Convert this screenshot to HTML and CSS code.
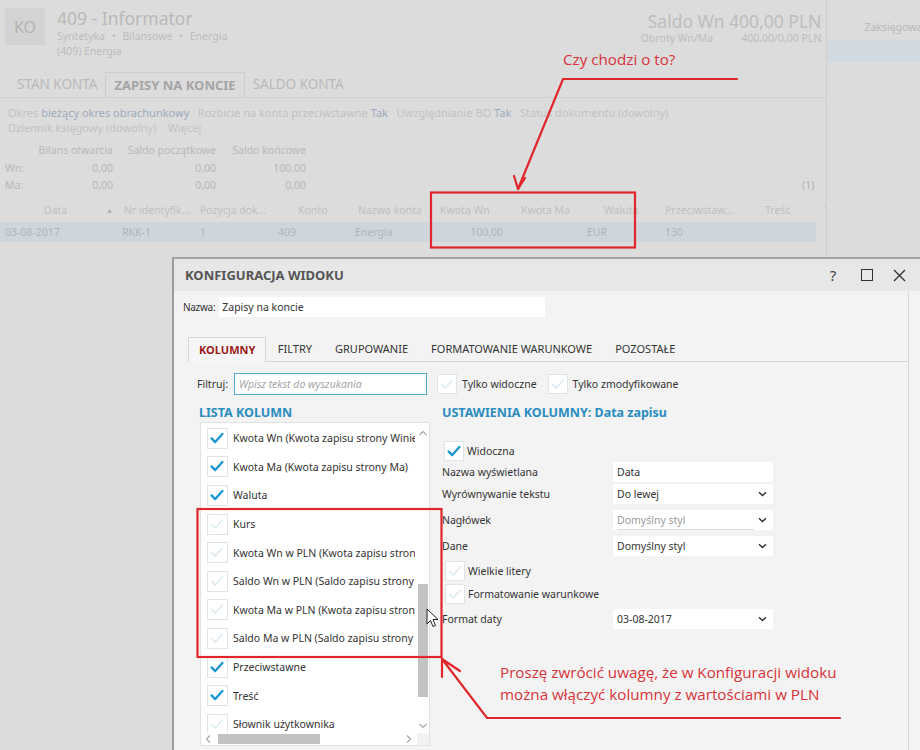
FILE: index.html
```html
<!DOCTYPE html>
<html lang="pl">
<head>
<meta charset="utf-8">
<title>Konfiguracja widoku</title>
<link rel="stylesheet" href="styles.css">
</head>
<body>
<div class="app">
  <div class="main">
    <header class="hdr">
      <div class="ko">KO</div>
      <div class="hdr-info">
        <div class="hdr-title">409 - Informator</div>
        <div class="hdr-sub">Syntetyka <span class="dot">•</span> Bilansowe <span class="dot">•</span> Energia</div>
        <div class="hdr-sub">(409) Energia</div>
      </div>
      <div class="hdr-right">
        <div class="saldo">Saldo Wn 400,00 PLN</div>
        <div class="obroty"><span>Obroty Wn/Ma</span><span>400,00/0,00 PLN</span></div>
      </div>
    </header>
    <nav class="tabs">
      <div class="tab">STAN KONTA</div>
      <div class="tab active">ZAPISY NA KONCIE</div>
      <div class="tab">SALDO KONTA</div>
    </nav>
    <div class="filters">
      <div>Okres <span class="lnk">bieżący okres obrachunkowy</span>&nbsp;&nbsp; Rozbicie na konta przeciwstawne <span class="lnk">Tak</span>&nbsp;&nbsp; Uwzględnianie BO <span class="lnk">Tak</span>&nbsp;&nbsp; Status dokumentu (dowolny)</div>
      <div>Dziennik księgowy (dowolny)&nbsp;&nbsp;&nbsp; Więcej</div>
    </div>
    <div class="bal-wrap">
      <div class="balances">
        <span></span><span>Bilans otwarcia</span><span>Saldo początkowe</span><span>Saldo końcowe</span>
        <span class="lbl">Wn:</span><span>0,00</span><span>0,00</span><span>100,00</span>
        <span class="lbl">Ma:</span><span>0,00</span><span>0,00</span><span>0,00</span>
      </div>
      <div class="count">(1)</div>
    </div>
    <div class="grid-head">
      <div class="h1">Data <span class="sort">▲</span></div>
      <div class="h2">Nr identyfik...</div>
      <div class="h3">Pozycja dok...</div>
      <div class="h4">Konto</div>
      <div class="h5">Nazwa konta</div>
      <div class="h6">Kwota Wn</div>
      <div class="h7">Kwota Ma</div>
      <div class="h8">Waluta</div>
      <div class="h9">Przeciwstaw...</div>
      <div class="h10">Treść</div>
      <div class="hup">˄</div>
    </div>
    <div class="grid-row">
      <div class="r1">03-08-2017</div>
      <div class="r2">RKK-1</div>
      <div class="r3">1</div>
      <div class="r4">409</div>
      <div class="r5">Energia</div>
      <div class="r6">100,00</div>
      <div class="r7"></div>
      <div class="r8">EUR</div>
      <div class="r9">130</div>
      <div class="r10"></div>
    </div>
  </div>
  <aside class="side">
    <div class="side-head">Zaksięgowa</div>
    <div class="side-bar"></div>
  </aside>
</div>

<div class="dialog">
  <div class="dlg-title">
    <span class="dlg-caption">KONFIGURACJA WIDOKU</span>
    <div class="dlg-btns">
      <span class="btn-help">?</span>
      <span class="btn-max"></span>
      <svg class="btn-close" width="13" height="13" viewBox="0 0 13 13"><path d="M1 1L12 12M12 1L1 12" stroke="#333" stroke-width="1.4" fill="none"/></svg>
    </div>
  </div>
  <div class="dlg-content">
    <div class="name-row">
      <span class="name-lbl">Nazwa:</span>
      <div class="name-input">Zapisy na koncie</div>
    </div>
    <div class="dtabs">
      <div class="dtab active">KOLUMNY</div>
      <div class="dtab">FILTRY</div>
      <div class="dtab">GRUPOWANIE</div>
      <div class="dtab">FORMATOWANIE WARUNKOWE</div>
      <div class="dtab">POZOSTAŁE</div>
    </div>
    <div class="panel">
      <div class="filter-row">
        <span>Filtruj:</span>
        <div class="search">Wpisz tekst do wyszukania</div>
        <span class="cb off"><svg viewBox="0 0 20 20"><path d="M4 10.5l4 4 8-9"/></svg></span>
        <span class="cbl">Tylko widoczne</span>
        <span class="cb off gap2"><svg viewBox="0 0 20 20"><path d="M4 10.5l4 4 8-9"/></svg></span>
        <span class="cbl">Tylko zmodyfikowane</span>
      </div>
      <div class="cols">
        <div class="left">
          <div class="sec">LISTA KOLUMN</div>
          <div class="listbox">
            <div class="items">
              <div class="item"><span class="cb on"><svg viewBox="0 0 20 20"><path d="M4 10.5l4 4 8-9"/></svg></span><span class="itxt">Kwota Wn (Kwota zapisu strony Winien)</span></div>
              <div class="item"><span class="cb on"><svg viewBox="0 0 20 20"><path d="M4 10.5l4 4 8-9"/></svg></span><span class="itxt">Kwota Ma (Kwota zapisu strony Ma)</span></div>
              <div class="item"><span class="cb on"><svg viewBox="0 0 20 20"><path d="M4 10.5l4 4 8-9"/></svg></span><span class="itxt">Waluta</span></div>
              <div class="item"><span class="cb off"><svg viewBox="0 0 20 20"><path d="M4 10.5l4 4 8-9"/></svg></span><span class="itxt">Kurs</span></div>
              <div class="item"><span class="cb off"><svg viewBox="0 0 20 20"><path d="M4 10.5l4 4 8-9"/></svg></span><span class="itxt">Kwota Wn w PLN (Kwota zapisu strony Winien)</span></div>
              <div class="item"><span class="cb off"><svg viewBox="0 0 20 20"><path d="M4 10.5l4 4 8-9"/></svg></span><span class="itxt">Saldo Wn w PLN (Saldo zapisu strony Winien)</span></div>
              <div class="item"><span class="cb off"><svg viewBox="0 0 20 20"><path d="M4 10.5l4 4 8-9"/></svg></span><span class="itxt">Kwota Ma w PLN (Kwota zapisu strony Ma)</span></div>
              <div class="item"><span class="cb off"><svg viewBox="0 0 20 20"><path d="M4 10.5l4 4 8-9"/></svg></span><span class="itxt">Saldo Ma w PLN (Saldo zapisu strony Ma)</span></div>
              <div class="item"><span class="cb on"><svg viewBox="0 0 20 20"><path d="M4 10.5l4 4 8-9"/></svg></span><span class="itxt">Przeciwstawne</span></div>
              <div class="item"><span class="cb on"><svg viewBox="0 0 20 20"><path d="M4 10.5l4 4 8-9"/></svg></span><span class="itxt">Treść</span></div>
              <div class="item"><span class="cb off"><svg viewBox="0 0 20 20"><path d="M4 10.5l4 4 8-9"/></svg></span><span class="itxt">Słownik użytkownika</span></div>
            </div>
            <div class="vscroll">
              <svg class="arr" width="10" height="8" viewBox="0 0 10 8"><path d="M1.5 6L5 2.5 8.5 6" fill="none" stroke="#a8a8a8" stroke-width="1.2"/></svg>
              <div class="vtrack"><div class="vthumb"></div></div>
              <svg class="arr" width="10" height="8" viewBox="0 0 10 8"><path d="M1.5 2L5 5.5 8.5 2" fill="none" stroke="#a8a8a8" stroke-width="1.2"/></svg>
            </div>
            <div class="hscroll">
              <svg width="8" height="10" viewBox="0 0 8 10"><path d="M6 1.5L2.5 5 6 8.5" fill="none" stroke="#a8a8a8" stroke-width="1.2"/></svg>
              <div class="htrack"><div class="hthumb"></div></div>
              <svg width="8" height="10" viewBox="0 0 8 10"><path d="M2 1.5L5.5 5 2 8.5" fill="none" stroke="#a8a8a8" stroke-width="1.2"/></svg>
            </div>
            <div class="corner"></div>
          </div>
        </div>
        <div class="right">
          <div class="sec">USTAWIENIA KOLUMNY: Data zapisu</div>
          <div class="srow chk m21"><span class="cb on"><svg viewBox="0 0 20 20"><path d="M4 10.5l4 4 8-9"/></svg></span><span class="cbl">Widoczna</span></div>
          <div class="srow m1"><span class="slbl">Nazwa wyświetlana</span><div class="ctl">Data</div></div>
          <div class="srow m2"><span class="slbl">Wyrównywanie tekstu</span><div class="ctl sel">Do lewej<svg class="chev" width="9" height="6" viewBox="0 0 9 6"><path d="M1 1.2l3.5 3.3L8 1.2" fill="none" stroke="#333" stroke-width="1.5"/></svg></div></div>
          <div class="srow m6"><span class="slbl">Nagłówek</span><div class="ctl sel ph"><span class="phtxt">Domyślny styl</span><svg class="chev" width="9" height="6" viewBox="0 0 9 6"><path d="M1 1.2l3.5 3.3L8 1.2" fill="none" stroke="#333" stroke-width="1.5"/></svg></div></div>
          <div class="srow m6"><span class="slbl">Dane</span><div class="ctl sel">Domyślny styl<svg class="chev" width="9" height="6" viewBox="0 0 9 6"><path d="M1 1.2l3.5 3.3L8 1.2" fill="none" stroke="#333" stroke-width="1.5"/></svg></div></div>
          <div class="srow chk m5 ind"><span class="cb off"><svg viewBox="0 0 20 20"><path d="M4 10.5l4 4 8-9"/></svg></span><span class="cbl">Wielkie litery</span></div>
          <div class="srow chk m3 ind"><span class="cb off"><svg viewBox="0 0 20 20"><path d="M4 10.5l4 4 8-9"/></svg></span><span class="cbl">Formatowanie warunkowe</span></div>
          <div class="srow m5"><span class="slbl">Format daty</span><div class="ctl sel">03-08-2017<svg class="chev" width="9" height="6" viewBox="0 0 9 6"><path d="M1 1.2l3.5 3.3L8 1.2" fill="none" stroke="#333" stroke-width="1.5"/></svg></div></div>
        </div>
      </div>
    </div>
  </div>
</div>

<svg class="cursor" width="14" height="20" viewBox="0 0 14 20"><path d="M1 1L1 16L4.5 12.5L7 18.5L9.5 17.5L7 11.5L12 11.5Z" fill="#fff" stroke="#222" stroke-width="1"/></svg>

<svg class="annot" width="920" height="750" viewBox="0 0 920 750">
  <g fill="none" stroke="#e0262b" stroke-width="2.2" stroke-linecap="round">
    <rect x="431" y="192.5" width="204" height="55"/>
    <path d="M737 79L563 79L518 189"/>
    <path d="M518 189L514 176M518 189L525 178"/>
    <rect x="197.5" y="509" width="244" height="148"/>
    <path d="M442 659L487 718L840 718"/>
    <path d="M442 659L442 677M442 659L460 671"/>
  </g>
</svg>
<div class="note note1">Czy chodzi o to?</div>
<div class="note note2">Proszę zwrócić uwagę, że w Konfiguracji widoku<br>można włączyć kolumny z wartościami w PLN</div>
</body>
</html>
```

FILE: styles.css
```css
* { box-sizing: border-box; margin: 0; padding: 0; }
html, body { width: 920px; height: 750px; overflow: hidden; }
body {
  position: relative;
  background: #dcdcdc;
  font-family: "Noto Sans", "Open Sans", sans-serif;
  font-size: 10.5px;
  color: #b3b3b3;
}

/* ---------- background window (dimmed) ---------- */
.app { display: flex; height: 750px; }
.main { width: 833px; border-right: 1px solid #d0d0d0; }
.side { flex: 1; }
.side-head { height: 40px; padding: 20px 0 0 37px; font-size: 10.5px; color: #b8b8b8; white-space: nowrap; overflow: hidden; }
.side-bar { height: 22px; background: #d2dae1; }

.hdr { display: flex; height: 60px; padding: 8px 9px 0 5px; }
.ko {
  width: 40px; height: 37px; background: #d3d3d3;
  display: flex; align-items: center; justify-content: center;
  font-size: 16px; color: #b4b4b4;
}
.hdr-info { margin-left: 12px; }
.hdr-title { font-size: 17.5px; line-height: 22px; color: #b9b9b9; margin-top: -1px; }
.hdr-sub { font-size: 10.5px; line-height: 15px; color: #bdbdbd; }
.dot { margin: 0 4px; }
.hdr-right { margin-left: auto; text-align: right; margin-right: -4px; }
.saldo { font-size: 17.5px; line-height: 20px; color: #bdbdbd; margin-top: 3px; }
.obroty { display: flex; gap: 28px; justify-content: flex-end; line-height: 14px; color: #bdbdbd; }

.tabs { display: flex; height: 26px; margin-top: 12px; padding-left: 9px; border-bottom: 1px solid #d2d2d2; }
.tab { padding: 0 8px; line-height: 25px; font-size: 13.5px; color: #b9b9b9; }
.tab.active { font-weight: bold; color: #a4a4a4; border: 1px solid #cdcdcd; border-bottom: none; font-size: 13px; }

.filters { margin-top: 7px; padding-left: 8px; line-height: 15px; color: #c2c2c2; white-space: nowrap; font-size: 11px; }
.lnk { color: #9cabbd; }

.bal-wrap { display: flex; margin-top: 7px; }
.balances {
  display: grid;
  grid-template-columns: 28px 82px 103px 90px;
  padding-left: 3px;
  line-height: 17.5px;
  text-align: right;
  color: #b8b8b8;
  white-space: nowrap;
}
.balances .lbl { text-align: left; padding-left: 2px; }
.count { margin-left: auto; align-self: flex-end; padding-right: 12px; line-height: 17.5px; }

.grid-head, .grid-row {
  display: grid;
  grid-template-columns: 117px 78px 77px 78px 80px 80px 72px 78px 85px 70px 1fr;
  height: 20px; line-height: 20px; white-space: nowrap;
}
.grid-head { margin-top: 5px; color: #c0c0c0; }
.grid-head > div { padding-left: 4px; }
.grid-head .h1 { padding-left: 44px; }
.sort { font-size: 7px; margin-left: 36px; vertical-align: 1px; color: #aaa; }
.grid-head .h2 { padding-left: 7px; }
.grid-head .h3 { padding-left: 5px; }
.grid-head .h4 { padding-left: 26px; }
.grid-head .h5 { padding-left: 8px; }
.grid-head .h6 { padding-left: 10px; }
.grid-head .h7 { padding-left: 11px; }
.grid-head .h8 { padding-left: 22px; }
.grid-head .h9 { padding-left: 5px; }
.grid-head .h10 { padding-left: 20px; }
.grid-head .hup { padding-left: 8px; font-size: 12px; }
.grid-row { margin-top: 2px; background: #ced6dc; color: #b1b5b9; width: 816px; }
.grid-row .r1 { padding-left: 5px; }
.grid-row .r2 { padding-left: 5px; }
.grid-row .r3 { padding-left: 5px; }
.grid-row .r4 { padding-left: 6px; }
.grid-row .r5 { padding-left: 5px; }
.grid-row .r6 { text-align: right; padding-right: 7px; }
.grid-row .r8 { padding-left: 5px; }
.grid-row .r9 { padding-left: 5px; }

/* ---------- dialog ---------- */
.dialog {
  position: absolute; left: 172px; top: 257px; width: 748px; height: 493px;
  background: #f3f3f3;
  border-left: 2px solid #9b9b9b;
  border-top: 2px solid #a4a4a4;
  color: #333;
  display: flex; flex-direction: column;
}
.dlg-title {
  height: 32px; background: #e7e7e7;
  display: flex; align-items: center; padding-left: 11px;
}
.dlg-caption { font-weight: bold; font-size: 13px; color: #555; }
.dlg-btns { margin-left: auto; display: flex; align-items: center; }
.btn-help { font-size: 15px; color: #444; width: 12px; text-align: center; margin-right: 22px; }
.btn-max { width: 12px; height: 12px; border: 1.4px solid #333; margin-right: 20px; }
.btn-close { margin-right: 14px; }

.dlg-content { flex: 1; padding-left: 9px; border-right: 1px solid #d8d8d8; margin-right: 11px; }
.name-row { display: flex; align-items: center; margin-top: 6px; height: 20px; }
.name-lbl { font-size: 10px; letter-spacing: -0.3px; }
.name-input { margin-left: 4px; width: 326px; height: 20px; line-height: 20px; background: #fff; padding-left: 3px; }

.dtabs { display: flex; height: 25px; margin-top: 20px; margin-left: 5px; border-bottom: 1px solid #d7d7d7; }
.dtab { padding: 0 11.5px; line-height: 24px; font-size: 11px; color: #333; }
.dtab.active {
  color: #9a1c1c; font-weight: bold; background: #f6f6f6;
  border: 1px solid #d7d7d7; border-bottom: none; height: 25px; padding: 0 10px;
}

.panel { padding-left: 14px; }
.filter-row { display: flex; align-items: center; height: 22px; margin-top: 11px; }
.search {
  margin-left: 6px; width: 193px; height: 22px; line-height: 20px;
  border: 1px solid #58acd4; background: #fff; padding-left: 4px;
  font-style: italic; color: #a5a5a5;
}
.filter-row .cb { margin-left: 10px; }
.filter-row .cb.gap2 { margin-left: 11px; }
.cbl { margin-left: 5px; }

.cb {
  display: inline-flex; width: 20px; height: 20px; flex: none;
  background: #fff; border: 1px solid #e3e3e3;
}
.cb svg { width: 18px; height: 18px; }
.cb path { fill: none; stroke-linecap: round; stroke-linejoin: round; }
.cb.on path { stroke: #1b96d2; stroke-width: 2.6; }
.cb.off path { stroke: #d3e7ee; stroke-width: 1.4; }

.cols { display: flex; margin-top: 11px; }
.sec { font-weight: bold; font-size: 12.5px; line-height: 14px; color: #2a8dc0; }
.left { width: 245px; }
.left .sec { padding-left: 2px; }
.listbox {
  margin-top: 2px; margin-left: 3px; width: 230px; height: 324px;
  background: #fff; border: 1px solid #e2e2e2;
  display: grid; grid-template-columns: 1fr 12px; grid-template-rows: 1fr 12px;
}
.items { padding-top: 1px; overflow: hidden; }
.item { display: flex; align-items: center; height: 28.6px; padding-left: 6px; }
.item .cb { width: 21px; height: 21px; }
.itxt { margin-left: 5px; white-space: nowrap; overflow: hidden; width: 182px; }
.vscroll { display: flex; flex-direction: column; align-items: center; padding: 6px 0 3px; }
.vtrack { flex: 1; width: 100%; display: flex; flex-direction: column; padding: 4px 1px; }
.vthumb { margin-top: 143px; height: 113px; background: #c2c2c2; }
.hscroll { display: flex; align-items: center; padding: 0 4px 0 3px; }
.htrack { flex: 1; height: 100%; padding: 1px 3px; }
.hthumb { margin-left: 3px; width: 102px; height: 10px; background: #c2c2c2; }
.corner { background: #f3f3f3; }

.right { flex: 1; }
.srow { display: flex; align-items: center; height: 20px; }
.srow.chk { padding-left: 2px; }
.srow.ind { padding-left: 3px; }
.srow.chk .cbl { margin-left: 3px; }
.m21 { margin-top: 21px; }
.m1 { margin-top: 1px; }
.m2 { margin-top: 2px; }
.m3 { margin-top: 3px; }
.m5 { margin-top: 5px; }
.m6 { margin-top: 6px; }
.slbl { width: 171px; }
.ctl {
  width: 160px; height: 20px; line-height: 20px; background: #fff;
  padding-left: 4px; position: relative; display: flex; align-items: center;
}
.chev { margin-left: auto; margin-right: 6px; }
.ph { color: #9a9a9a; }
.phtxt { width: 137px; border-bottom: 1px solid #dcdcdc; line-height: 17px; margin-top: 1px; }

.cursor { position: absolute; left: 426px; top: 608px; }

/* ---------- annotations ---------- */
.annot { position: absolute; left: 0; top: 0; pointer-events: none; }
.note {
  position: absolute; color: #d8333a; font-family: "Open Sans", "Noto Sans", sans-serif;
  font-size: 15.2px; line-height: 22px; white-space: nowrap;
}
.note1 { left: 563px; top: 48px; }
.note2 { left: 500px; top: 661px; }
```
